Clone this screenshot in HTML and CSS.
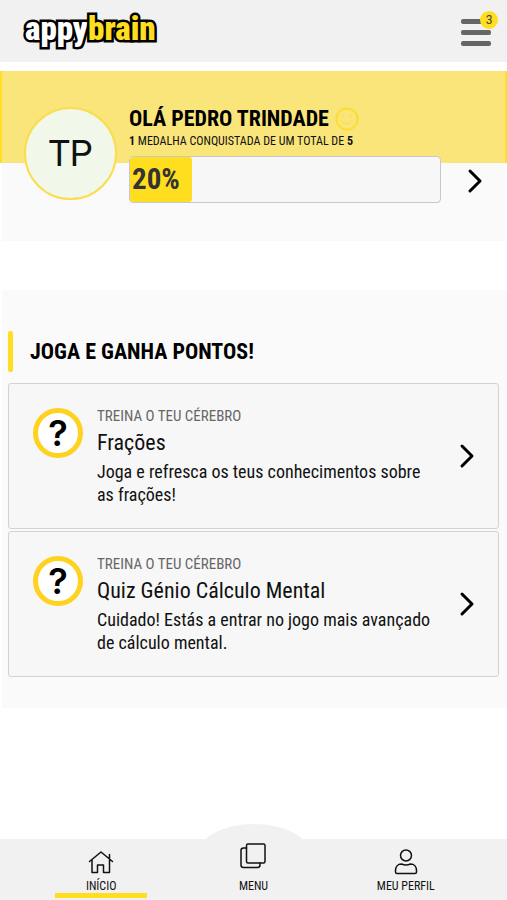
FILE: index.html
```
<!DOCTYPE html>
<html lang="pt">
<head>
    <meta charset="UTF-8">
    <meta name="viewport" content="width=device-width, initial-scale=1.0">
    <title>appybrain</title>
    <link rel="stylesheet" href="styles.css">
</head>
<body>

    <header class="topbar">
        <a href="#" class="logo"><span>appy</span><span class="logo-brain">brain</span></a>
        <button class="menu-button" aria-label="Abrir menu">
            <span class="line"></span>
            <span class="line"></span>
            <span class="line"></span>
            <span class="badge">3</span>
        </button>
    </header>

    <main>
        <section class="profile">
            <div class="avatar">TP</div>
            <div class="profile-info">
                <h1>OLÁ PEDRO TRINDADE
                    <svg class="smiley" viewBox="0 0 24 24">
                        <circle cx="12" cy="12" r="10.5"/>
                        <path class="face" d="M7 14c1 4 9 4 10 0M8 8v2M16 8v2"/>
                    </svg>
                </h1>
                <p><b>1</b> MEDALHA CONQUISTADA DE UM TOTAL DE <b>5</b></p>
                <div class="progress">
                    <div class="progress-bar" style="width: 20%">20%</div>
                </div>
            </div>
            <a href="#" class="arrow" aria-label="Ver medalhas">
                <svg viewBox="0 0 16 26"><path d="M3 3l10 10L3 23"/></svg>
            </a>
        </section>

        <section class="games">
            <h2>JOGA E GANHA PONTOS!</h2>

            <a href="#" class="game">
                <span class="game-icon">?</span>
                <div class="game-text">
                    <span class="game-type">TREINA O TEU CÉREBRO</span>
                    <h3>Frações</h3>
                    <p>Joga e refresca os teus conhecimentos sobre as frações!</p>
                </div>
                <svg class="chevron" viewBox="0 0 16 26"><path d="M3 3l10 10L3 23"/></svg>
            </a>

            <a href="#" class="game">
                <span class="game-icon">?</span>
                <div class="game-text">
                    <span class="game-type">TREINA O TEU CÉREBRO</span>
                    <h3>Quiz Génio Cálculo Mental</h3>
                    <p>Cuidado! Estás a entrar no jogo mais avançado de cálculo mental.</p>
                </div>
                <svg class="chevron" viewBox="0 0 16 26"><path d="M3 3l10 10L3 23"/></svg>
            </a>
        </section>
    </main>

    <nav class="bottom-nav">
        <a href="#" class="active">
            <svg viewBox="0 0 26 26"><path d="M1.500 12.500L13 3l11.500 9.500M4 11v12.500h5.500V16h6v7.500H21.500V11M21.500 10V5.500"/></svg>
            INÍCIO
        </a>
        <a href="#" class="center">
            <svg viewBox="0 0 26 26"><rect x="6.500" y="1" width="18.500" height="19" rx="1.500"/><path d="M6.500 5H3.500Q1 5 1 7.500V22q0 2.500 2.500 2.500H17.500q2.500 0 2.500-2.500V20"/></svg>
            MENU
        </a>
        <a href="#">
            <svg viewBox="0 0 26 26"><circle cx="13" cy="6.500" r="5.500"/><path d="M8.500 15Q13 17 17.500 15C21.500 15 23.500 18 23.500 21.500v1.500q0 1.500-1.500 1.500H4q-1.500 0-1.500-1.500v-1.500C2.500 18 4.500 15 8.500 15z"/></svg>
            MEU PERFIL
        </a>
    </nav>

</body>
</html>
```
FILE: styles.css
```
* {
    margin: 0;
    padding: 0;
    box-sizing: border-box;
}

body {
    font-family: "Roboto Condensed", "Liberation Sans Narrow", Roboto, sans-serif;
    background: #fff;
    color: #111;
    min-height: 100vh;
    padding-bottom: 76px;
}

a {
    color: inherit;
    text-decoration: none;
}

svg {
    fill: none;
    stroke: #111;
    stroke-width: 2;
    stroke-linecap: round;
    stroke-linejoin: round;
}

/* Top bar */
.topbar {
    display: flex;
    justify-content: space-between;
    align-items: center;
    height: 62px;
    padding: 0 16px 0 25px;
    background: #f1f1f1;
}

.logo {
    padding-bottom: 4px;
    font-size: 33px;
    font-weight: 900;
    line-height: 36px;
    color: #fff;
    -webkit-text-stroke: 5px #000;
    paint-order: stroke fill;
    text-shadow: 1px 1px 0 #000, 2px 2px 0 #000;
}

.logo-brain {
    color: #ffdd1f;
}

.menu-button {
    position: relative;
    display: flex;
    flex-direction: column;
    gap: 6px;
    width: 30px;
    margin-top: 2px;
    border: none;
    background: none;
    cursor: pointer;
}

.line {
    height: 5px;
    border-radius: 2px;
    background: #666;
}

.badge {
    position: absolute;
    top: -8px;
    right: -7px;
    width: 18px;
    height: 18px;
    border-radius: 50%;
    background: #ffdd1f;
    color: #444;
    font-family: Roboto, sans-serif;
    font-size: 12px;
    line-height: 18px;
    text-align: center;
}

/* Profile */
.profile {
    display: flex;
    align-items: flex-start;
    height: 170px;
    margin-top: 9px;
    padding: 36px 22px 0 22px;
    border: solid #fff;
    border-width: 0 2px;
    background: linear-gradient(#fae57a 92px, #fafafa 92px);
    border-image: linear-gradient(#ffdf22 92px, #fff 92px) 0 2;
}

.avatar {
    flex: none;
    width: 93px;
    height: 93px;
    border: 2px solid #fadd50;
    border-radius: 50%;
    background: #f1f8e9;
    font-family: Roboto, sans-serif;
    font-size: 36px;
    line-height: 90px;
    text-align: center;
}

.profile-info {
    flex: 1;
    margin-left: 12px;
}

.profile h1 {
    display: flex;
    align-items: center;
    gap: 6px;
    height: 24px;
    font-size: 22px;
    line-height: 24px;
    white-space: nowrap;
    color: #000;
}

.smiley {
    width: 24px;
    height: 24px;
    stroke: #fddc35;
}

.face {
    stroke-width: 1;
}

.profile p {
    margin-bottom: 5px;
    font-size: 12px;
    line-height: 20px;
    white-space: nowrap;
}

.progress {
    height: 47px;
    border: 1px solid #c8c8c8;
    border-radius: 4px;
    background: #f7f7f7;
    overflow: hidden;
}

.progress-bar {
    height: 100%;
    padding-left: 2px;
    border-radius: 3px;
    background: #ffdd1f;
    color: #333;
    font-size: 29px;
    font-weight: bold;
    line-height: 45px;
}

.arrow {
    margin: 61px 0 0 26px;
}

.arrow svg,
.chevron {
    display: block;
    flex: none;
    width: 16px;
    height: 26px;
    stroke: #000;
    stroke-width: 3;
}

/* Games */
.games {
    margin: 49px 0 0 2px;
    padding: 41px 8px 29px 6px;
    background: #fafafa;
}

.games h2 {
    position: relative;
    margin-bottom: 11px;
    padding-left: 22px;
    font-size: 22px;
    line-height: 41px;
    color: #000;
}

.games h2::before {
    content: "";
    position: absolute;
    top: 0;
    left: 0;
    width: 5px;
    height: 100%;
    border-radius: 2px;
    background: #ffdd1f;
}

.game {
    display: flex;
    align-items: center;
    margin-bottom: 2px;
    padding: 22px 23px 22px 24px;
    border: 1px solid #d2d2d2;
    border-radius: 3px;
    background: #f7f7f7;
}

.game-icon {
    flex: none;
    align-self: flex-start;
    width: 50px;
    height: 50px;
    margin-top: 2px;
    border: 5px solid #ffd21f;
    border-radius: 50%;
    background: #fff;
    color: #000;
    font-family: Inter, sans-serif;
    font-size: 36px;
    font-weight: 600;
    line-height: 40px;
    text-align: center;
}

.game-text {
    flex: 1;
    min-width: 0;
    margin: 0 20px 0 14px;
}

.game-type {
    display: block;
    font-size: 15px;
    line-height: 20px;
    color: #666;
}

.game h3 {
    font-size: 22px;
    font-weight: normal;
    line-height: 34px;
}

.game p {
    font-size: 18px;
    line-height: 23px;
}

/* Bottom navigation */
.bottom-nav {
    position: fixed;
    bottom: 0;
    left: 0;
    display: flex;
    width: 100%;
    height: 61px;
    padding: 0 25px;
    background: #f1f1f1;
}

/* Round bump behind the middle item */
.bottom-nav::before {
    content: "";
    position: absolute;
    top: -15px;
    left: 50%;
    width: 112px;
    height: 76px;
    border-radius: 50% 50% 0 0 / 30px 30px 0 0;
    background: #f1f1f1;
    transform: translateX(-50%);
}

.bottom-nav a {
    position: relative;
    flex: 1;
    padding-top: 10px;
    font-size: 12px;
    line-height: 16px;
    text-align: center;
}

.bottom-nav svg {
    display: block;
    width: 26px;
    height: 26px;
    margin: 0 auto 3px;
    stroke-width: 1.5;
}

.bottom-nav .center {
    padding-top: 4px;
}

.bottom-nav .center svg {
    margin-bottom: 9px;
}

.bottom-nav .active::after {
    content: "";
    position: absolute;
    bottom: 2px;
    left: 20%;
    right: 20%;
    height: 5px;
    background: #ffdd1f;
}
```
